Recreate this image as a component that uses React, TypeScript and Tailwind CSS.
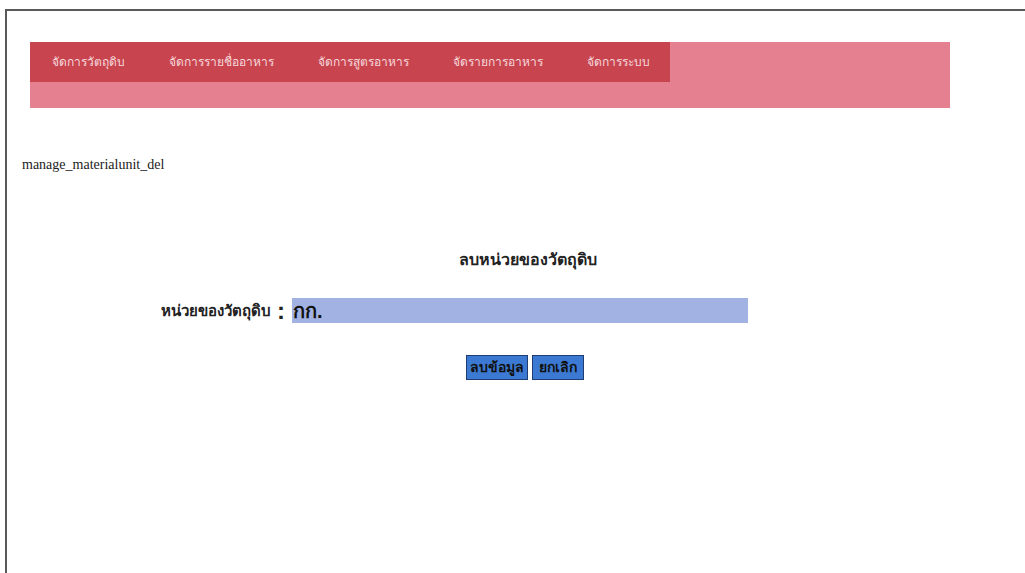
import React from 'react';

const menuItems = ['จัดการวัตถุดิบ', 'จัดการรายชื่ออาหาร', 'จัดการสูตรอาหาร', 'จัดรายการอาหาร', 'จัดการระบบ'];

const App: React.FC = () => {
    return (
        <div className="h-[573px] w-[1025px] overflow-hidden bg-white pt-[9px] pl-[5px]">
            <div className="h-full border-l-2 border-t-2 border-[#5a5a5a] font-['Liberation_Serif',serif] text-[#222]">

                {/* top menu band */}
                <div className="ml-[23px] mt-[31px] w-[920px] bg-[#e4808f]">
                    <nav className="flex h-[40px] w-[640px] items-center gap-[44px] bg-[#c8454f] pl-[22px]">
                        {menuItems.map((item) => (
                            <a key={item} href="#" className="shrink-0 whitespace-nowrap text-[12px] text-[#f6d9dc] font-['Liberation_Sans',sans-serif]">
                                {item}
                            </a>
                        ))}
                    </nav>
                    <div className="h-[26px]"></div>
                </div>

                <p className="ml-[15px] mt-[48px] text-[14px] leading-[18px]">manage_materialunit_del</p>

                {/* delete form */}
                <form className="ml-[154px] mt-[76px] w-[734px]">
                    <h2 className="text-center text-[16px] font-bold leading-[20px]">ลบหน่วยของวัตถุดิบ</h2>

                    <div className="mt-[28px] flex items-center">
                        <label className="text-[15px] font-bold leading-[20px]">หน่วยของวัตถุดิบ</label>
                        <span className="ml-[6px] font-['Liberation_Sans',sans-serif] text-[24px] font-bold leading-[24px]">:</span>
                        <input
                            type="text"
                            defaultValue="กก."
                            className="ml-[7px] h-[25px] w-[456px] bg-[#a2b2e2] px-[1px] font-['Liberation_Sans',sans-serif] text-[20px] font-bold text-[#111] outline-none"
                        />
                    </div>

                    <div className="mt-[32px] flex justify-center gap-[4px] pr-[6px]">
                        <button type="submit" className="h-[25px] border border-[#1f3c73] bg-[#3c79d2] px-[3px] text-[14px] font-bold text-[#111]">ลบข้อมูล</button>
                        <button type="button" className="h-[25px] border border-[#1f3c73] bg-[#3c79d2] px-[6px] text-[14px] font-bold text-[#111]">ยกเลิก</button>
                    </div>
                </form>

            </div>
        </div>
    );
};

export default App;
